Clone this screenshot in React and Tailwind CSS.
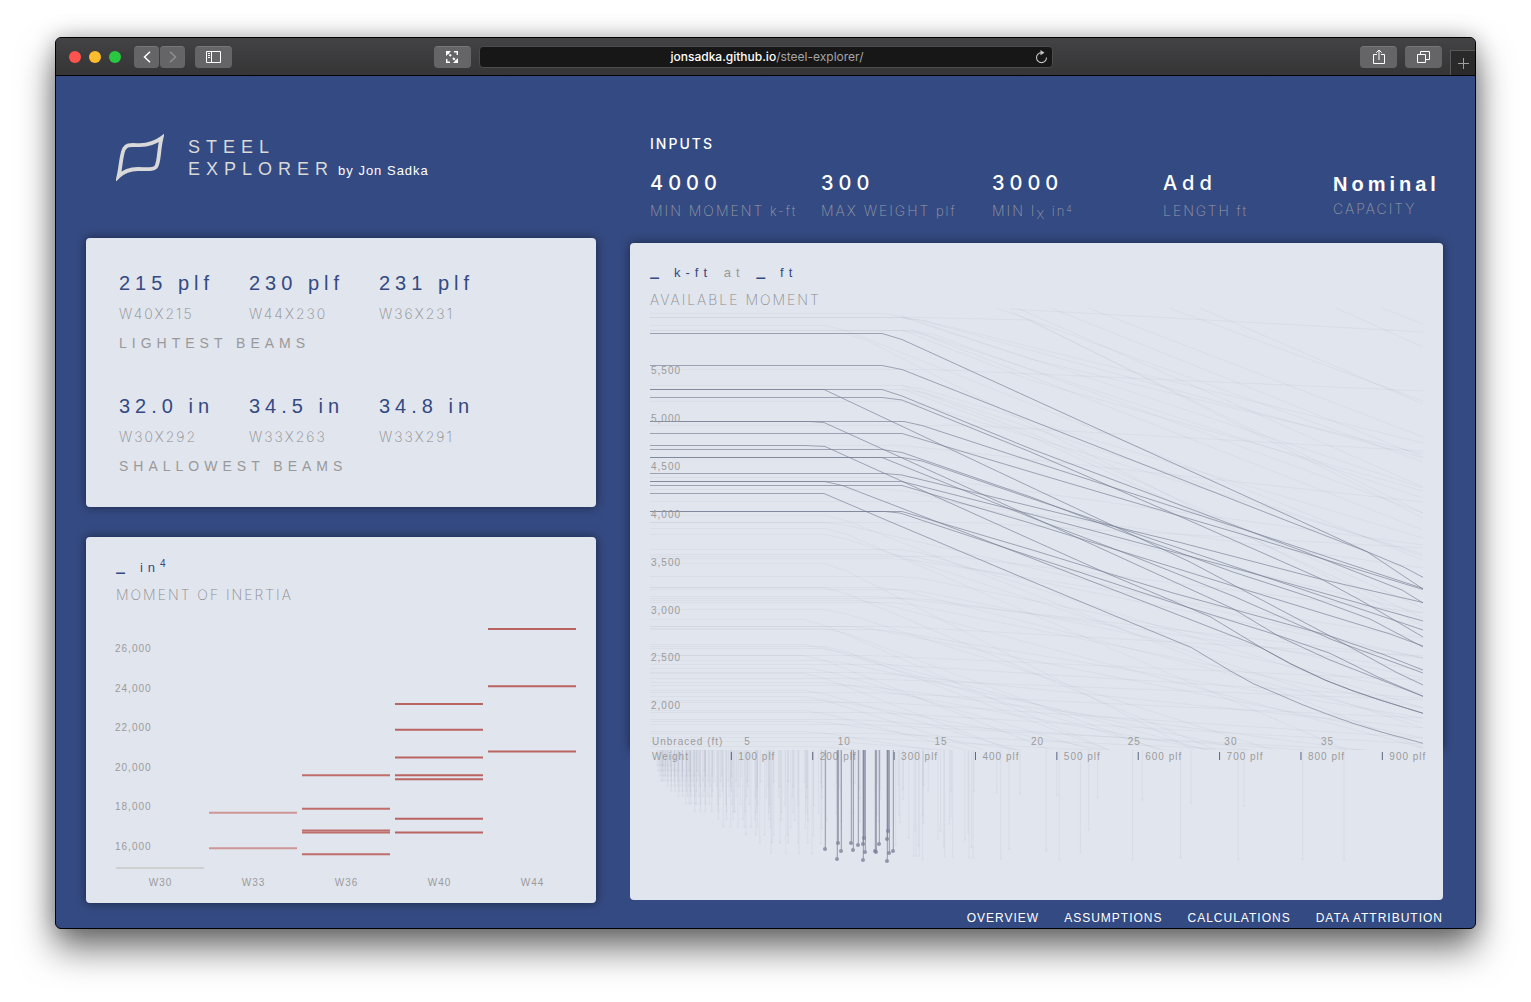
import React from 'react';

const inputs = [
  { id: 'moment', value: '4000', label: 'MIN MOMENT', unit: 'k-ft' },
  { id: 'weight', value: '300', label: 'MAX WEIGHT', unit: 'plf' },
  { id: 'inertia', value: '3000', label: 'MIN I', sub: 'X', unit: 'in', sup: '4' },
  { id: 'length', value: 'Add', label: 'LENGTH', unit: 'ft' },
];

const beamGroups = [
  {
    title: 'LIGHTEST BEAMS',
    beams: [['215 plf', 'W40X215'], ['230 plf', 'W44X230'], ['231 plf', 'W36X231']],
  },
  {
    title: 'SHALLOWEST BEAMS',
    beams: [['32.0 in', 'W30X292'], ['34.5 in', 'W33X263'], ['34.8 in', 'W33X291']],
  },
];

const footerLinks = ['OVERVIEW', 'ASSUMPTIONS', 'CALCULATIONS', 'DATA ATTRIBUTION'];

// moment of inertia, in^4, by nominal depth
const inertiaGroups = [
  { name: 'W30', color: '#cfcfd2', values: [14900] },
  { name: 'W33', color: '#cf9696', values: [17700, 15900] },
  { name: 'W36', color: '#bf6e6b', values: [19600, 17900, 16800, 16700, 15600] },
  { name: 'W40', color: '#b96461', values: [23200, 21900, 20500, 19600, 19400, 17400, 16700] },
  { name: 'W44', color: '#b96461', values: [27000, 24100, 20800] },
];
const inertiaTicks = [26000, 24000, 22000, 20000, 18000, 16000];
const inertiaY = (v) => 136.5 - (v - 20800) * 0.01976;

// available moment curves of the matching beams
const activeCurves = [
  '0,25.5 232,25.5 252,31.5 390,94.5 648,212 717,243.7 773,281',
  '0,57.5 232,57.5 252,61.5 390,116 635,212 717,243.7 753,258.7 773,269.3',
  '0,81.5 232,81.5 252,88 380,140.5 623,232 650,242 752,282 773,295',
  '0,81.5 174,81.5 380,178.7 451,212 540,254 610,291 680,328 747,364.7 773,377',
  '0,89.5 232,89.5 252,92 380,143.7 538,212 670,270.3 713,293.7 773,329',
  '0,113.5 254,113.5 272,117.5 380,152.7 608,226 773,280.5',
  '0,113.5 160,113.5 174,114.5 380,208 583,300.7 630,329 680,352 773,388.3',
  '0,125.5 252,125.5 380,163.7 608,231 773,281.5',
  '0,137.5 155,137.5 175,138.5 380,231 453,263.7 560,308.7 613,340.7 641,356 675,372 702,382.500 730,392 773,405.3',
  '0,141.5 232,141.5 252,144.5 380,188.7 473,224 583,264 660,289 720,311 773,339',
  '0,149.5 232,149.5 380,209 480,247 583,288 683,332 773,365',
  '0,149.5 252,149.5 272,153 380,190 773,322',
  '0,165.5 235,165.5 252,167 380,198 527,233.7 670,271 773,294.5',
  '0,173.5 175,173.5 193,177.7 380,249.5 600,334.7 613,340.7 641,356 675,372 702,382.500 730,392 773,405.3',
  '0,173.5 252,173.5 380,206 580,259 773,313',
  '0,177.5 252,177.5 380,215 580,277 740,326 773,338',
  '0,185.5 174,185.5 236,212 380,272.7 541.7,339.7 580,362.7 603,375.500 630,387 652,396.500 675,405.3 702,415 730,423.7 773,435.3',
  '0,203.5 235,203.5 250,205 380,248 523,294.7 630,328 680,345.3 730,370 773,388.3',
  '0,203.5 252,203.5 380,241.3 523,285 677,327 733,346.3 773,362',
];

// the rest of the catalogue: [moment at 0 ft, x of the bend, moment at 40 ft]
const idleCurves = [
  [5, 234, 180], [9, 250, 150], [9, 250, 135], [17, 175, 252], [22, 252, 190], [22, 262, 205],
  [25, 195, 318], [61, 262, 83], [77, 250, 230], [81, 254, 248], [93, 250, 246], [117, 300, 143],
  [137, 240, 194], [169, 262, 237], [181, 240, 305], [193, 280, 260], [207, 175, 440], [214, 175, 350],
  [214, 300, 240], [220, 175, 475], [226, 174, 420], [241, 250, 400], [246, 240, 350], [248, 290, 305],
  [250, 240, 330], [255, 174, 560], [268, 250, 370], [279, 174, 530], [279, 230, 415], [281, 250, 385],
  [288, 220, 350], [290, 260, 362], [292, 210, 440], [294, 240, 400], [301, 174, 490], [311, 154, 580],
  [318, 230, 348], [318, 200, 430], [320, 174, 540], [321, 220, 410], [336, 154, 520], [338, 174, 560],
  [340, 170, 500], [347, 200, 372], [347, 154, 590], [352, 174, 480], [356, 220, 390], [360, 160, 540],
  [364, 210, 420], [365, 154, 600], [370, 190, 392], [374, 174, 480], [377, 200, 450], [382, 154, 560],
  [384, 200, 410], [388, 154, 580], [392, 174, 500], [394, 220, 430], [402, 154, 560], [404, 210, 436],
  [411, 190, 450], [413, 160, 500], [416, 200, 445], [423, 154, 520], [425, 210, 450], [429, 190, 460],
  [433, 174, 480], [438, 160, 500],
];
const strayCurves = [
  '347,0 773,154', '367,0 773,179', '401,0 773,149', '438,0 773,129', '519,0 773,93', '550,0 773,96',
  '686,0 773,39', '732,0 773,16', '360,1 773,24', '362,4 773,205', '252,9 380,12 773,210', '252,9 380,51 773,146',
  '252,22 380,72 773,183', '262,22 380,68 773,222', '252,77 380,125 773,300', '252,81 380,128 773,310',
];
const momentTicks = ['5,500', '5,000', '4,500', '4,000', '3,500', '3,000', '2,500', '2,000'];
const lengthTicks = [5, 10, 15, 20, 25, 30, 35];
const weightTicks = [100, 200, 300, 400, 500, 600, 700, 800, 900];

const activeStems = [
  [175, 99], [187, 109], [188, 93], [191, 101], [201, 93], [203, 100], [208, 95], [213, 110],
  [214, 88], [213, 94], [215, 102], [225, 101], [226, 102], [229, 94], [237, 111], [237, 89],
  [238, 81], [239, 103], [243, 101],
];

// weights (plf) rolled for each nominal depth (in)
const catalogue = {
  44: [335],
  40: [593, 503, 431, 397, 372, 362, 324, 199, 392, 331, 327, 183, 167, 149],
  36: [853, 802, 723, 652, 529, 487, 441, 395, 361, 330, 302, 210, 194, 182, 170, 160, 150, 135],
  33: [387, 354, 318, 201, 169, 152, 141, 130, 118],
  30: [391, 357, 326, 235, 211, 191, 173, 148, 132, 124, 116, 108, 99, 90],
  27: [539, 368, 336, 307, 281, 258, 235, 217, 194, 178, 161, 146, 129, 114, 102, 94, 84],
  24: [370, 335, 306, 279, 250, 229, 207, 192, 176, 162, 146, 131, 117, 104, 103, 94, 84, 76, 68, 62, 55],
  21: [201, 182, 166, 147, 132, 122, 111, 101, 93, 83, 73, 68, 62, 57, 55, 50, 48, 44],
  18: [311, 283, 258, 234, 211, 192, 175, 158, 143, 130, 119, 106, 97, 86, 76, 71, 65, 60, 55, 50, 46, 40, 35],
  16: [100, 89, 77, 67, 57, 50, 45, 40, 36, 31, 26],
  14: [730, 665, 605, 550, 500, 455, 426, 398, 370, 342, 311, 283, 257, 233, 211, 193, 176, 159, 145, 132, 120, 109, 99, 90, 82, 74, 68, 61, 53, 48, 43, 38, 34, 30, 26, 22],
  12: [336, 305, 279, 252, 230, 210, 190, 170, 152, 136, 120, 106, 96, 87, 79, 72, 65, 58, 53, 50, 45, 40, 35, 30, 26, 22, 19, 16, 14],
  10: [112, 100, 88, 77, 68, 60, 54, 49, 45, 39, 33, 30, 26, 22, 19, 17, 15, 12],
  8: [67, 58, 48, 40, 35, 31, 28, 24, 21, 18, 15, 13, 10],
  6: [25, 20, 16, 15, 12, 9],
};
const idleStems = Object.entries(catalogue).flatMap(([depth, weights]) =>
  weights.map((w) => [w * 0.8137, Math.min(Number(depth) + w * w * 0.000015, 43) * 2.54])
);

const toolButton =
  'flex h-[22px] items-center justify-center rounded bg-[#656567] text-white border-t border-[#77777a]';
const thinLabel = "font-['Inter',sans-serif] font-extralight text-sm tracking-[2px]";
const chartText = "font-['Liberation_Sans',sans-serif] text-[10px] tracking-[1px] fill-[#9b9b9b]";

const TitleBar = () => {
  return (
    <div className="grid h-[38px] grid-cols-[1fr_574px_1fr] items-center border-b border-black bg-linear-to-b from-[#434345] to-[#353536]">
      <div className="flex items-center pl-[13px]">
        <span className="h-3 w-3 rounded-full bg-[#ff544d]" />
        <span className="ml-2 h-3 w-3 rounded-full bg-[#ffbd2e]" />
        <span className="ml-2 h-3 w-3 rounded-full bg-[#28c940]" />
        <button aria-label="Back" className={`${toolButton} ml-[13px] w-[25px]`}>
          <svg width="8" height="12" viewBox="0 0 8 12" fill="none" stroke="currentColor" strokeWidth="1.5">
            <path d="M7 .7 1.5 6 7 11.3" />
          </svg>
        </button>
        <button aria-label="Forward" className={`${toolButton} ml-px w-[25px]`}>
          <svg width="8" height="12" viewBox="0 0 8 12" fill="none" stroke="#8f8f91" strokeWidth="1.5">
            <path d="m1 .7 5.500 5.300L1 11.300" />
          </svg>
        </button>
        <button aria-label="Sidebar" className={`${toolButton} ml-[10px] w-[37px]`}>
          <svg width="15" height="12" viewBox="0 0 15 12" fill="none" stroke="currentColor">
            <path d="M.5.5h14v11H.5zM5.500.5v11M2 2.500h2M2 4.500h2M2 6.500h2" />
          </svg>
        </button>
        <button aria-label="Full screen" className={`${toolButton} mr-2 ml-auto w-[37px]`}>
          <svg width="12" height="12" viewBox="0 0 12 12" fill="none" stroke="currentColor" strokeWidth="1.4">
            <path d="M8 .7h3.300V4M4 11.300H.7V8" />
            <path d="M1 1l4 4M7 7l4 4" strokeDasharray="2.500 1" strokeWidth="2" />
            <path d="M0 0h5L0 5zM12 12H7l5-5z" fill="currentColor" stroke="none" />
          </svg>
        </button>
      </div>
      <div className="flex h-[22px] items-center rounded border border-[#4c4c4e] bg-[#171717] px-1">
        <p className="flex-1 pl-4 text-center font-['Inter',sans-serif] text-xs text-[#a5a5a5]">
          <span className="font-medium text-white">jonsadka.github.io</span>/steel-explorer/
        </p>
        <button aria-label="Reload" className="text-[#c4c4c4]">
          <svg width="13" height="14" viewBox="0 0 13 14" fill="none" stroke="currentColor" strokeWidth="1.1">
            <path d="M6.500 2.600A5 5 0 1 0 11.500 7.600" />
            <path d="M5.500 0 9.500 2.800 5.500 5.200z" fill="currentColor" stroke="none" />
          </svg>
        </button>
      </div>
      <div className="flex items-center justify-end self-stretch">
        <button aria-label="Share" className={`${toolButton} w-[37px]`}>
          <svg width="12" height="16" viewBox="0 0 12 16" fill="none" stroke="currentColor">
            <path d="M4 5.500H.5v9h11v-9H8M6 11V1M3.300 3.700 6 1l2.700 2.700" />
          </svg>
        </button>
        <button aria-label="Tabs" className={`${toolButton} mx-2 w-[37px]`}>
          <svg width="13" height="12" viewBox="0 0 13 12" fill="none" stroke="currentColor">
            <path d="M.5 3.500h8v8h-8zM3.500 3.500v-3h9v8h-4" />
          </svg>
        </button>
        <button aria-label="New tab" className="flex h-[25px] w-[25px] items-center justify-center self-end border-t border-l border-[#59595b] bg-[#2a2a2b]">
          <svg width="11" height="11" viewBox="0 0 11 11" stroke="#a0a0a0">
            <path d="M5.500 0v11M0 5.500h11" />
          </svg>
        </button>
      </div>
    </div>
  );
};

const Logo = () => {
  return (
    <header className="flex items-start pt-[58px] pl-[30px]">
      <svg width="48" height="47" viewBox="0 0 48 47" fill="none" stroke="#d9d9d9" strokeWidth="3.800">
        <path d="M45.500 4C38 9.500 32 11 24 11.200C14 11 11 10 8 15C5 21 5 32 2.500 42.500C8 37 14 35 22 35C32 35 37 36 40 33C43.500 28 42.500 16 45.500 4Z" />
      </svg>
      <h1 className="ml-6 pt-0.5 text-lg leading-[22px] tracking-[6px] text-[#d9d9d9]">
        STEEL
        <br />
        EXPLORER
        <span className="ml-1 text-[13px] tracking-[1px] text-white">by Jon Sadka</span>
      </h1>
    </header>
  );
};

const Inputs = () => {
  return (
    <form className="pt-[58px] pl-5">
      <h2 className="font-['Inter',sans-serif] text-sm leading-5 font-medium tracking-[2px] text-white">INPUTS</h2>
      <div className="mt-4 grid grid-cols-[171fr_171fr_171fr_170fr_110fr]">
        {inputs.map((item) => (
          <div key={item.id} className="min-w-0">
            <input
              id={item.id}
              defaultValue={item.value}
              className="block h-[26px] w-full bg-transparent font-['Inter',sans-serif] text-xl font-medium tracking-[5px] text-white outline-none"
            />
            <label htmlFor={item.id} className={`${thinLabel} block pt-px leading-7 whitespace-nowrap text-[#9a9ca6]`}>
              {item.label}
              {item.sub && <sub className="text-xs">{item.sub}</sub>}
              <span className="text-[13px]"> {item.unit}</span>
              {item.sup && <sup className="text-[9px]">{item.sup}</sup>}
            </label>
          </div>
        ))}
        <div>
          <select
            id="capacity"
            className="block h-6 w-full appearance-none bg-transparent font-['Liberation_Sans',sans-serif] text-xl font-bold tracking-[4px] text-white outline-none"
          >
            <option>Nominal</option>
          </select>
          <label htmlFor="capacity" className={`${thinLabel} block pt-px leading-7 text-[#9a9ca6]`}>CAPACITY</label>
        </div>
      </div>
    </form>
  );
};

const BeamSummary = () => {
  return (
    <section className="space-y-[33px] rounded bg-[#e1e5ee] pt-[29px] pb-[27px] pl-[33px] shadow-[0_0_10px_rgba(0,0,0,0.5)]">
      {beamGroups.map((group) => (
        <div key={group.title}>
          <div className="flex">
            {group.beams.map(([value, name]) => (
              <div key={name} className="w-[130px] whitespace-nowrap">
                <p className="text-xl leading-8 tracking-[5px] text-[#344a82]">{value}</p>
                <p className={`${thinLabel} leading-[30px] text-[#8b8b8b]`}>{name}</p>
              </div>
            ))}
          </div>
          <h3 className="text-sm leading-7 tracking-[5px] text-[#999999]">{group.title}</h3>
        </div>
      ))}
    </section>
  );
};

const Blank = () => <span className="font-['Roboto',sans-serif] text-xl leading-6">_ </span>;

const InertiaChart = () => {
  return (
    <section className="rounded bg-[#e1e5ee] pt-4 pr-5 pb-2 pl-[30px] shadow-[0_0_10px_rgba(0,0,0,0.5)]">
      <p className="h-7 text-[13px] leading-6 tracking-[5px] text-[#344a82]">
        <Blank />in<sup className="text-[10px]">4</sup>
      </p>
      <h3 className={`${thinLabel} leading-7 text-[#8b8b8b]`}>MOMENT OF INERTIA</h3>
      <svg className="mt-1.5 block w-full overflow-visible" viewBox="0 0 460 280">
        {inertiaTicks.map((v) => (
          <text key={v} x="-1" y={inertiaY(v) + 3.5} className={chartText}>
            {v.toLocaleString('en-US')}
          </text>
        ))}
        {inertiaGroups.map((group, i) => (
          <g key={group.name}>
            {group.values.map((v) => (
              <line key={v} x1={i * 93} x2={i * 93 + 88} y1={inertiaY(v)} y2={inertiaY(v)} stroke={group.color} strokeWidth="2" />
            ))}
            <text x={i * 93 + 44.5} y="271" textAnchor="middle" className={chartText}>{group.name}</text>
          </g>
        ))}
      </svg>
    </section>
  );
};

const MomentChart = () => {
  return (
    <section>
      <div className="rounded-t bg-[#e1e5ee] px-5 pt-[15px] shadow-[0_0_10px_rgba(0,0,0,0.5)]">
        <p className="h-7 text-[13px] leading-6 tracking-[5px] text-[#344a82]">
          <Blank />k-ft <span className="mx-[3px] text-[#999999]">at </span>
          <Blank />ft
        </p>
        <h3 className={`${thinLabel} leading-7 text-[#8b8b8b]`}>AVAILABLE MOMENT</h3>
        <svg className="-mt-1.5 block w-full" viewBox="0 0 773 442">
          <g fill="none" stroke="#343c64" strokeOpacity="0.045">
            {idleCurves.map(([y, bend, end], i) => (
              <polyline key={i} points={`0,${y + 0.5} ${bend},${y + 0.5} ${bend + 22},${y + (end - y) * 0.025} 773,${end}`} />
            ))}
            {strayCurves.map((points) => (
              <polyline key={points} points={points} />
            ))}
          </g>
          <g fill="none" stroke="#777e94" strokeOpacity="0.65">
            {activeCurves.map((points) => (
              <polyline key={points} points={points} />
            ))}
          </g>
          {momentTicks.map((label, i) => (
            <text key={label} x="1" y={66 + i * 47.9} className={chartText}>{label}</text>
          ))}
          <text x="2" y="437" className={chartText}>Unbraced (ft)</text>
          {lengthTicks.map((ft) => (
            <text key={ft} x={ft * 19.33 + 1} y="437" textAnchor="middle" className={chartText}>{ft}</text>
          ))}
        </svg>
      </div>
      <div className="relative rounded-b bg-[#e1e5ee] px-5">
        <svg className="block w-full overflow-visible" viewBox="0 0 773 150">
          {idleStems.map(([x, y], i) => (
            <g key={i} stroke="#343c64" fill="#343c64" opacity="0.045">
              <line x1={x} x2={x} y1="0" y2={y} />
              <circle cx={x} cy={y} r="1.2" stroke="none" />
            </g>
          ))}
          <text x="2" y="10" className={chartText}>Weight</text>
          {weightTicks.map((w) => (
            <g key={w}>
              <line x1={w * 0.8137} x2={w * 0.8137} y1="2" y2="10" stroke="#5c6480" />
              <text x={w * 0.8137 + 7} y="10" className={chartText}>{w} plf</text>
            </g>
          ))}
          {activeStems.map(([x, y]) => (
            <g key={`${x}-${y}`} stroke="#777e94" fill="#777e94" opacity="0.75">
              <line x1={x + 0.3} x2={x + 0.3} y1="0" y2={y} />
              <circle cx={x} cy={y} r="2" stroke="none" />
            </g>
          ))}
        </svg>
      </div>
    </section>
  );
};

const App = () => {
  return (
    <main className="min-h-screen bg-white px-[55px] pt-[37px] pb-[73px] font-['Liberation_Sans',sans-serif]">
      <div className="overflow-hidden rounded-md border border-black bg-[#344a82] shadow-[0_20px_36px_rgba(0,0,0,0.55),0_0_22px_rgba(0,0,0,0.25)]">
        <TitleBar />
        <div className="grid grid-cols-[510fr_813fr] gap-[34px] pr-8 pb-[2px] pl-[30px]">
          <div>
            <div className="h-[162px]">
              <Logo />
            </div>
            <div className="space-y-[30px]">
              <BeamSummary />
              <InertiaChart />
            </div>
          </div>
          <div>
            <div className="h-[167px]">
              <Inputs />
            </div>
            <MomentChart />
            <footer className="flex justify-end gap-[25px] pt-2.5 text-xs leading-4 tracking-[1px] text-white">
              {footerLinks.map((link) => (
                <a key={link} href="#">{link}</a>
              ))}
            </footer>
          </div>
        </div>
      </div>
    </main>
  );
};

export default App;
